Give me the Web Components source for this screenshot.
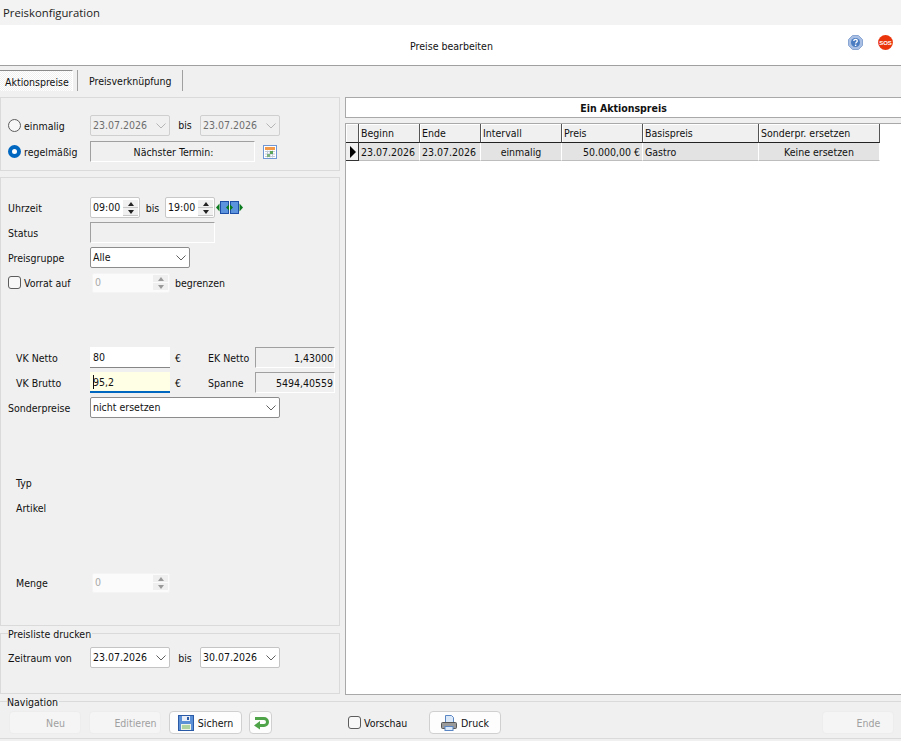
<!DOCTYPE html>
<html lang="de">
<head>
<meta charset="utf-8">
<title>Preiskonfiguration</title>
<style>
  html, body { margin: 0; height: 100%; background: #f0f0f0; overflow: hidden; }
  body { font: 10.500px "DejaVu Sans", sans-serif; font-stretch: condensed; color: #111; }
</style>
</head>
<body>
<price-window></price-window>

<script>
// shared look of the little arrows
const chevron = `<svg width="10" height="6" viewBox="0 0 10 6"><path d="M.5.500l4.500 4.500L9.500.5" fill="none" stroke="currentColor"/></svg>`;

class XCombo extends HTMLElement {
    constructor(){
        super();
        this.attachShadow({mode: "open"});
        this.shadowRoot.innerHTML = `
        <style>
            :host{ display: flex; box-sizing: border-box; height: 21px; align-items: center; justify-content: space-between;
                   padding: 0 3px 0 2px; background: #fff; border: 1px solid #c4c4c4; border-radius: 2px; color: #606060; }
            :host([strong]){ border-color: #8c8c8c; }
            :host([disabled]){ background: #f0f0f0; color: #b5b5b5; border-color: #cfcfcf; }
            span{ color: #111; padding-bottom: 2px; }
            :host([disabled]) span{ color: #6e6e6e; }
            svg{ display: block; }
        </style>
        <span><slot></slot></span>${chevron}`;
    }
}

class XSpin extends HTMLElement {
    constructor(){
        super();
        this.attachShadow({mode: "open"});
        this.shadowRoot.innerHTML = `
        <style>
            :host{ display: flex; box-sizing: border-box; height: 21px; align-items: center; justify-content: space-between;
                   padding: 0 1px 0 2px; background: #fff; border: 1px solid #c8c8c8; border-radius: 2px; }
            :host([disabled]){ border-color: #f4f4f4; background: #fbfbfb; color: #a8a8a8; height: 20px; }
            .val{ padding-bottom: 2px; }
            .btns{ display: flex; flex-direction: column; gap: 1px; }
            b{ display: flex; width: 15px; height: 7px; background: #f0f0f0; align-items: center; justify-content: center; box-shadow: 0 1px 0 #c8c8c8; }
            i{ width: 0; height: 0; border: 3.500px solid transparent; border-top: 0; border-bottom: 4px solid #222; }
            b + b i{ border-bottom: 0; border-top: 4px solid #222; }
            :host([disabled]) b{ box-shadow: none; background: #efefef; }
            :host([disabled]) i{ border-bottom-color: #999; border-top-color: #999; }
        </style>
        <span class="val"><slot></slot></span><span class="btns"><b><i></i></b><b><i></i></b></span>`;
    }
}

// sunken read-only box, grey top and left edge, white bottom and right
class XBox extends HTMLElement {
    constructor(){
        super();
        this.attachShadow({mode: "open"});
        this.shadowRoot.innerHTML = `
        <style>
            :host{ display: flex; box-sizing: border-box; height: 21px; align-items: center; padding: 0 1px 0 3px;
                   border: 1px solid #fff; border-top-color: #a0a0a0; border-left-color: #a0a0a0; background: #f0f0f0; }
            :host([center]){ justify-content: center; }
            :host([right]){ justify-content: flex-end; }
        </style>
        <slot></slot>`;
    }
}

class XInput extends HTMLElement {
    constructor(){
        super();
        this.attachShadow({mode: "open"});
        this.shadowRoot.innerHTML = `
        <style>
            :host{ display: flex; box-sizing: border-box; height: 21px; align-items: center; padding: 0 3px;
                   background: #fff; border-bottom: 1px solid #868686; }
            :host([focus]){ background: #ffffe6; border-bottom: 2px solid #0067c0; }
            i{ width: 1px; height: 14px; background: #111; margin-right: -1px; }
        </style>
        ${this.hasAttribute("focus") ? "<i></i>" : ""}<slot></slot>`;
    }
}

class XCheck extends HTMLElement {
    constructor(){
        super();
        this.attachShadow({mode: "open"});
        this.shadowRoot.innerHTML = `
        <style>
            :host{ display: inline-flex; align-items: center; gap: 3px; }
            i{ box-sizing: border-box; width: 13px; height: 13px; background: #f7f7f7; border: 1px solid #5c5c5c; border-radius: 3px; }
            :host([radio]) i{ border-radius: 50%; }
            :host([on]) i{ border: 4px solid #0067c0; background: #fff; }
        </style>
        <i></i><slot></slot>`;
    }
}

class XButton extends HTMLElement {
    constructor(){
        super();
        this.attachShadow({mode: "open"});
        this.shadowRoot.innerHTML = `
        <style>
            :host{ display: flex; box-sizing: border-box; height: 23px; align-items: center; justify-content: center; gap: 4px;
                   background: #fdfdfd; border: 1px solid #d0d0d0; border-radius: 4px; }
            :host([disabled]){ background: #f5f5f5; border-color: #ededed; color: #a0a0a0; padding-left: 21px; }
            ::slotted(svg){ display: block; }
        </style>
        <slot></slot>`;
    }
}

// titled frame, the legend sits on the top line
class XPanel extends HTMLElement {
    constructor(){
        super();
        this.attachShadow({mode: "open"});
        const legend = this.getAttribute("legend");
        this.shadowRoot.innerHTML = `
        <style>
            :host{ display: block; box-sizing: border-box; position: relative; border: 1px solid #dadada; }
            span{ position: absolute; left: 7px; top: -6px; background: #f0f0f0; padding-right: 1px; line-height: 13px; }
        </style>
        ${legend ? `<span>${legend}</span>` : ""}<slot></slot>`;
    }
}

class XRow extends HTMLElement {
    constructor(){
        super();
        this.attachShadow({mode: "open"});
        this.shadowRoot.innerHTML = `
        <style>
            :host{ display: grid; height: 21px; align-items: center; }
        </style>
        <slot></slot>`;
    }
}

class PriceGrid extends HTMLElement {
    constructor(){
        super();
        this.attachShadow({mode: "open"});
        const cols = "13px 61px 61px 81px 81px 116px 121px";
        this.shadowRoot.innerHTML = `
        <style>
            :host{ display: flex; flex-direction: column; box-sizing: border-box; background: #fff; border: 1px solid #a9a9a9; border-right: 0; }
            .cap{ height: 20px; display: flex; align-items: center; justify-content: center; font-weight: bold; border-bottom: 1px solid #a9a9a9; box-sizing: border-box; }
            .gap{ height: 6px; box-sizing: border-box; background: #f0f0f0; border-bottom: 1px solid #a9a9a9; margin-left: -1px; }
            .row{ display: grid; grid-template-columns: ${cols}; width: 534px; }
            .row > div{ box-sizing: border-box; display: flex; align-items: center; padding: 0 2px; white-space: nowrap; overflow: hidden; }
            .head > div{ height: 19px; background: #f0f0f0; border-right: 1px solid #555; border-bottom: 1px solid #222; box-shadow: inset 1px 1px 0 #fff; }
            .body > div{ height: 18px; background: #e3e3e3; border-right: 1px solid #fff; border-bottom: 1px solid #bdbdbd; }
            .body > div.mark{ background: #f0f0f0; border-right: 1px solid #333; border-bottom: 1px solid #333; padding: 0 0 0 4px; }
            .c{ justify-content: center; } .r{ justify-content: flex-end; }
            i{ width: 0; height: 0; border: 6px solid transparent; border-left: 6px solid #000; border-right: 0; }
        </style>
        <div class="cap">Ein Aktionspreis</div>
        <div class="gap"></div>
        <div class="row head">
            <div></div><div>Beginn</div><div>Ende</div><div>Intervall</div><div>Preis</div><div>Basispreis</div><div>Sonderpr. ersetzen</div>
        </div>
        <div class="row body">
            <div class="mark"><i></i></div><div>23.07.2026</div><div>23.07.2026</div><div class="c">einmalig</div>
            <div class="r">50.000,00&nbsp;€</div><div>Gastro</div><div class="c">Keine ersetzen</div>
        </div>`;
    }
}

const template = document.createElement("template");
template.innerHTML = `
    <style>
        :host{ display: flex; flex-direction: column; width: 901px; height: 741px; background: #f0f0f0; }
        .title{ height: 25px; box-sizing: border-box; padding: 5px 0 0 3px; background: #f3f3f3; font: 11.300px "Open Sans", "Noto Sans", sans-serif; line-height: 15px; color: #222; }
        .header{ height: 41px; box-sizing: border-box; background: #fff; border-bottom: 1px solid #a0a0a0; display: flex; align-items: center; position: relative; padding-top: 1px; }
        .header p{ margin: 0; width: 100%; text-align: center; padding-left: 2px; }
        .help{ position: absolute; top: 10px; left: 848px; display: flex; gap: 15px; }
        .help svg{ display: block; }
        .help text{ font: bold 6px "Liberation Sans", Arial, sans-serif; fill: #fff; }
        .tabs{ display: flex; height: 25px; box-sizing: border-box; padding-top: 4px; }
        .tab{ height: 21px; box-sizing: border-box; display: flex; align-items: center; }
        .tab.on{ width: 73px; padding: 1px 0 0 5px; border-top: 1px solid #8a8a8a; border-right: 1px solid #fff; margin-right: 4px;
                 background: repeating-conic-gradient(#f0f0f0 0 25%, #fff 0 50%) 0 0 / 2px 2px; }
        .tab.off{ width: 106px; padding-left: 11px; border: 1px solid #a0a0a0; border-width: 0 1px; }
        .main{ display: flex; height: 604px; margin-top: 6px; gap: 5px; }
        .left{ width: 340px; display: flex; flex-direction: column; }
        .right{ flex: 1; }
        price-grid{ height: 598px; }
        .p1{ height: 74px; padding: 17px 0 0 7px; box-sizing: border-box; }
        .p2{ height: 449px; padding: 19px 0 0 7px; box-sizing: border-box; margin-top: 6px; }
        .p3{ height: 61px; padding: 13px 0 0 7px; box-sizing: border-box; margin-top: 7px; }
        .r1{ grid-template-columns: 82px 80px 30px 80px; }
        .r1b{ grid-template-columns: 82px 165px 8px 14px; margin-top: 5px; }
        .r2{ grid-template-columns: 82px 50px 25px 50px 28px; }
        .r3{ grid-template-columns: 82px 125px; }
        .r4{ grid-template-columns: 82px 100px; }
        .r5{ grid-template-columns: 84px 78px auto; }
        .r6{ grid-template-columns: 8px 74px 80px 38px 47px 80px; }
        .r7{ grid-template-columns: 82px 190px; }
        .bis{ text-align: center; }
        .p1 .bis, .up{ padding-bottom: 2px; }
        .eu{ padding-left: 5px; }
        .m5{ margin-top: 5px; } .m4{ margin-top: 4px; }
        .after{ padding-left: 5px; }
        .nav{ height: 38px; box-sizing: border-box; border-width: 1px 0; display: flex; align-items: flex-start; padding: 9px 7px 0 9px; }
        .nav x-button:nth-of-type(1){ width: 72px; }
        .nav x-button:nth-of-type(2){ width: 72px; margin-left: 8px; }
        .nav x-button:nth-of-type(3){ width: 73px; margin-left: 8px; }
        .nav x-button:nth-of-type(4){ width: 23px; margin-left: 7px; }
        .nav x-check{ width: 64px; margin: 5px 0 0 76px; }
        .nav x-button:nth-of-type(5){ width: 72px; margin-left: 17px; }
        .nav x-button:nth-of-type(6){ width: 72px; margin-left: auto; }
    </style>

    <div class="title">Preiskonfiguration</div>
    <div class="header">
        <p>Preise bearbeiten</p>
        <div class="help">
            <svg width="15" height="15" viewBox="0 0 15 15"><path d="M4.500.5h6l4 4v6l-4 4h-6l-4-4v-6z" fill="#a9c0e4" stroke="#8aa6d2"/><circle cx="7.500" cy="7.500" r="4.500" fill="#4a7cc2"/><path d="M5.800 6c0-2.200 3.500-2.200 3.500 0 0 1.300-1.700 1.300-1.700 2.600" fill="none" stroke="#fff" stroke-width="1.300"/><path d="M6.900 9.600h1.400V11H6.900z" fill="#fff"/></svg>
            <svg width="15" height="15" viewBox="0 0 15 15"><circle cx="7.500" cy="7.500" r="7.400" fill="#ea340c"/><text x="7.500" y="9.800" text-anchor="middle">SOS</text></svg>
        </div>
    </div>
    <div class="tabs">
        <div class="tab on">Aktionspreise</div>
        <div class="tab off">Preisverknüpfung</div>
    </div>
    <div class="main">
        <div class="left">
            <x-panel class="p1">
                <x-row class="r1">
                    <x-check radio>einmalig</x-check>
                    <x-combo disabled>23.07.2026</x-combo>
                    <span class="bis">bis</span>
                    <x-combo disabled>23.07.2026</x-combo>
                </x-row>
                <x-row class="r1b">
                    <x-check radio on>regelmäßig</x-check>
                    <x-box center>Nächster Termin:</x-box>
                    <span></span>
                    <svg width="14" height="14" viewBox="0 0 14 14"><rect x=".5" y=".5" width="13" height="13" fill="#fff" stroke="#6f97d6"/><rect x="2" y="2" width="10" height="3" fill="#f39a4a"/><path d="M2 6.500h10M2 9h10M2 11.500h10M4.500 5.500v7M7 5.500v7M9.500 5.500v7" stroke="#bfc9d8"/><rect x="7" y="6" width="3" height="3" fill="#5aa35a"/><rect x="4" y="9" width="3" height="3" fill="#7fb07f"/></svg>
                </x-row>
            </x-panel>

            <x-panel class="p2">
                <x-row class="r2">
                    <span>Uhrzeit</span>
                    <x-spin>09:00</x-spin>
                    <span class="bis">bis</span>
                    <x-spin>19:00</x-spin>
                    <svg width="27" height="13" viewBox="0 0 27 13" style="margin-left:1px"><rect x="4.500" y=".5" width="8" height="12" fill="#5b93dd" stroke="#1d4fa8"/><rect x="14.500" y=".5" width="8" height="12" fill="#5b93dd" stroke="#1d4fa8"/><path d="M3.500 2.500v8L0 6.500zM13 3.500v6l-3-3zM14 3.500v6l3-3zM23.500 2.500v8l3.500-4z" fill="#0a7a1e"/></svg>
                </x-row>
                <x-row class="r3 m4">
                    <span>Status</span>
                    <x-box></x-box>
                </x-row>
                <x-row class="r4 m4">
                    <span>Preisgruppe</span>
                    <x-combo strong>Alle</x-combo>
                </x-row>
                <x-row class="r5 m4">
                    <x-check>Vorrat auf</x-check>
                    <x-spin disabled>0</x-spin>
                    <span class="after">begrenzen</span>
                </x-row>

                <x-row class="r6" style="margin-top:54px">
                    <span></span><span>VK Netto</span>
                    <x-input>80</x-input>
                    <span class="eu">€</span>
                    <span>EK Netto</span>
                    <x-box right>1,43000</x-box>
                </x-row>
                <x-row class="r6 m4">
                    <span></span><span>VK Brutto</span>
                    <x-input focus>95,2</x-input>
                    <span class="eu">€</span>
                    <span>Spanne</span>
                    <x-box right>5494,40559</x-box>
                </x-row>
                <x-row class="r7 m4">
                    <span>Sonderpreise</span>
                    <x-combo strong>nicht ersetzen</x-combo>
                </x-row>

                <x-row class="r6" style="margin-top:55px"><span></span><span class="up">Typ</span></x-row>
                <x-row class="r6 m4"><span></span><span class="up">Artikel</span></x-row>
                <x-row class="r5" style="margin-top:53px">
                    <span style="padding:1px 0 0 8px">Menge</span>
                    <x-spin disabled>0</x-spin>
                </x-row>
            </x-panel>

            <x-panel class="p3" legend="Preisliste drucken">
                <x-row class="r1">
                    <span>Zeitraum von</span>
                    <x-combo>23.07.2026</x-combo>
                    <span class="bis">bis</span>
                    <x-combo>30.07.2026</x-combo>
                </x-row>
            </x-panel>
        </div>
        <div class="right"><price-grid></price-grid></div>
    </div>
    <x-panel class="nav" legend="Navigation">
        <x-button disabled>Neu</x-button>
        <x-button disabled>Editieren</x-button>
        <x-button>
            <svg width="16" height="16" viewBox="0 0 16 16"><rect x=".5" y=".5" width="15" height="15" fill="#5b8fd6" stroke="#2a5aa5"/><rect x="4" y="1" width="8" height="5" fill="#e9eef6"/><rect x="9" y="2" width="2" height="3" fill="#2a5aa5"/><rect x="3" y="9" width="10" height="6" fill="#eef3e6"/><path d="M4 11h8M4 13h8" stroke="#6fb05a"/></svg>
            Sichern
        </x-button>
        <x-button>
            <svg width="16" height="14" viewBox="0 0 16 14"><path d="M2 2.500h9a3.500 3.500 0 0 1 0 7H6" fill="none" stroke="#4fa348" stroke-width="3"/><path d="M7 5L1 9.500 7 13.500z" fill="#4fa348"/></svg>
        </x-button>
        <x-check>Vorschau</x-check>
        <x-button>
            <svg width="16" height="16" viewBox="0 0 16 16"><path d="M4.500.5h6l2 2v7h-8z" fill="#dbe8f8" stroke="#5a86c4"/><rect x=".5" y="7.500" width="15" height="6" rx="1" fill="#9a9a9a" stroke="#555"/><rect x="4" y="11.500" width="8" height="4" fill="#dbe8f8" stroke="#5a86c4"/></svg>
            Druck
        </x-button>
        <x-button disabled>Ende</x-button>
    </x-panel>
`;

class PriceWindow extends HTMLElement {
    constructor(){
        super();
        this.attachShadow({mode: "open"});
        this.shadowRoot.appendChild(template.content.cloneNode(true));
    }
}

customElements.define("x-combo", XCombo);
customElements.define("x-spin", XSpin);
customElements.define("x-box", XBox);
customElements.define("x-input", XInput);
customElements.define("x-check", XCheck);
customElements.define("x-button", XButton);
customElements.define("x-panel", XPanel);
customElements.define("x-row", XRow);
customElements.define("price-grid", PriceGrid);
customElements.define("price-window", PriceWindow);
</script>
</body>
</html>
